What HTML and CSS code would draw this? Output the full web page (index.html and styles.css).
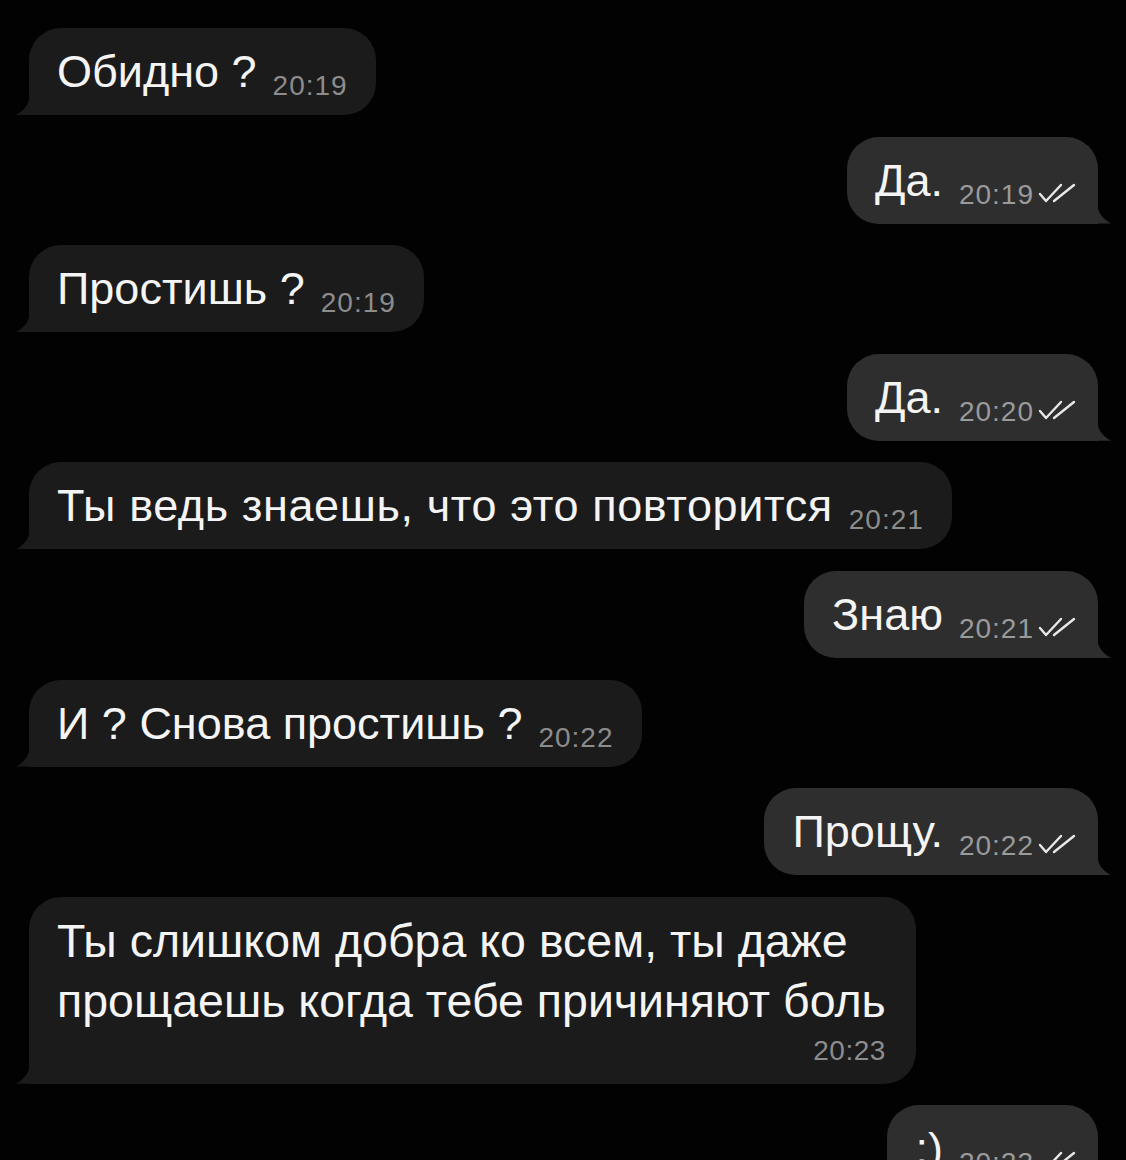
FILE: index.html
```html
<!DOCTYPE html>
<html lang="ru">
<head>
<meta charset="utf-8">
<title>Чат</title>
<link rel="stylesheet" href="styles.css">
</head>
<body>
<main class="chat">
  <div class="row in"><div class="bubble">Обидно ?<span class="time">20:19</span></div></div>
  <div class="row out"><div class="bubble">Да.<span class="time">20:19</span><svg class="ticks" viewBox="0 0 38 20"><path d="M2 11 L8 18 L23 2 M16 18 L36 2"/></svg></div></div>
  <div class="row in"><div class="bubble">Простишь ?<span class="time">20:19</span></div></div>
  <div class="row out"><div class="bubble">Да.<span class="time">20:20</span><svg class="ticks" viewBox="0 0 38 20"><path d="M2 11 L8 18 L23 2 M16 18 L36 2"/></svg></div></div>
  <div class="row in"><div class="bubble wide">Ты ведь знаешь, что это повторится<span class="time">20:21</span></div></div>
  <div class="row out"><div class="bubble">Знаю<span class="time">20:21</span><svg class="ticks" viewBox="0 0 38 20"><path d="M2 11 L8 18 L23 2 M16 18 L36 2"/></svg></div></div>
  <div class="row in"><div class="bubble">И ? Снова простишь ?<span class="time">20:22</span></div></div>
  <div class="row out"><div class="bubble">Прощу.<span class="time">20:22</span><svg class="ticks" viewBox="0 0 38 20"><path d="M2 11 L8 18 L23 2 M16 18 L36 2"/></svg></div></div>
  <div class="row in"><div class="bubble multi">Ты слишком добра ко всем, ты даже<br>прощаешь когда тебе причиняют боль<span class="time block">20:23</span></div></div>
  <div class="row out"><div class="bubble">:)<span class="time">20:23</span><svg class="ticks" viewBox="0 0 38 20"><path d="M2 11 L8 18 L23 2 M16 18 L36 2"/></svg></div></div>
</main>
</body>
</html>
```
FILE: styles.css
```css
html, body {
  margin: 0;
  height: 100%;
  overflow: hidden;
  background: #020202;
}

.chat {
  display: flex;
  flex-direction: column;
  gap: 21.6px;
  padding: 28px 28px 0 29px;
  font-family: "Liberation Sans", Arial, sans-serif;
}

.row {
  display: flex;
}
.row.in { justify-content: flex-start; }
.row.out { justify-content: flex-end; }

.bubble {
  position: relative;
  padding: 14px 28px 13px 28px;
  font-size: 45px;
  line-height: 60px;
  color: #f4f4f4;
  white-space: nowrap;
  border-radius: 32px;
}

/* the long single-line message is set a little looser */
.bubble.wide {
  letter-spacing: 0.6px;
}

.bubble.multi {
  font-size: 46.5px;
  padding-right: 30px;
}

.in .bubble {
  background: #1b1b1b;
  border-bottom-left-radius: 0;
}
.out .bubble {
  background: #2e2e2e;
  border-bottom-right-radius: 0;
  padding-left: 28px;
  padding-right: 22px;
}

/* bubble tails */
.bubble::before {
  content: "";
  position: absolute;
  bottom: 0;
  width: 14px;
  height: 22px;
  background: inherit;
}
.in .bubble::before {
  left: -13px;
  clip-path: path("M14 0 C14 10 9 17 0 22 L14 22 Z");
}
.out .bubble::before {
  right: -13px;
  clip-path: path("M0 0 C0 10 5 17 14 22 L0 22 Z");
}

.time {
  font-size: 28px;
  line-height: 28px;
  color: #8c8c8c;
  margin-left: 16px;
  vertical-align: -8px;
  letter-spacing: 1px;
}
.out .time { color: #9a9a9a; }

.time.block {
  display: block;
  text-align: right;
  line-height: 40px;
  margin: 0;
  letter-spacing: 0.5px;
}

.ticks {
  width: 38px;
  height: 20px;
  margin-left: 4px;
  vertical-align: -7px;
  fill: none;
  stroke: #e8e8e8;
  stroke-width: 2.4;
  stroke-linecap: round;
  stroke-linejoin: round;
}
```
